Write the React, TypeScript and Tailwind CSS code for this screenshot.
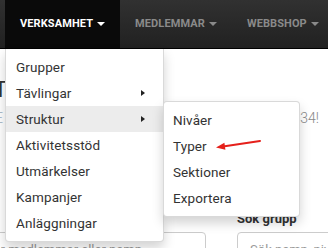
import React from "react";

const menuItems = ["Grupper", "Tävlingar", "Struktur", "Aktivitetsstöd", "Utmärkelser", "Kampanjer", "Anläggningar"];
const hasSub = ["Tävlingar", "Struktur"];
const subItems = ["Nivåer", "Typer", "Sektioner", "Exportera"];

function SubMenu() {
  return (
    <ul className="absolute left-full -top-[5px] z-10 w-[137px] py-[5px] bg-white border border-black/15 rounded-[4px] shadow-[0_6px_12px_rgba(0,0,0,0.175)]">
      {subItems.map((s) => (
        <li key={s} className="flex items-center h-[26px] pl-[9px]">
          {s}
        </li>
      ))}
    </ul>
  );
}

function Dropdown() {
  return (
    <ul className="absolute left-0 top-[49px] z-10 w-[159px] py-[5px] bg-white border border-black/15 border-t-0 rounded-b-[4px] shadow-[0_6px_12px_rgba(0,0,0,0.175)] text-[13.5px] leading-[20px] font-normal text-[#333]">
      {menuItems.map((it) => (
        <li
          key={it}
          className={`relative flex items-center justify-between h-[26px] pl-[10px] pr-[18px] ${it === "Struktur" ? "bg-[#ececec]" : ""}`}
        >
          <span>{it}</span>
          {hasSub.includes(it) && (
            <span className="w-0 h-0 border-y-[3.5px] border-y-transparent border-l-[4px] border-l-[#222]" />
          )}
          {it === "Struktur" && <SubMenu />}
        </li>
      ))}
    </ul>
  );
}

function NavItem({ label, active, children }: { label: string; active?: boolean; children?: React.ReactNode }) {
  return (
    <div
      className={`relative flex items-center gap-[4px] h-[48px] px-[15px] text-[11px] font-bold tracking-[0.1px] ${
        active ? "bg-[#0a0a0a] text-white" : "text-[#8a8a8a]"
      }`}
    >
      <span>{label}</span>
      <span
        className={`w-0 h-0 border-x-4 border-x-transparent border-t-4 ${active ? "border-t-white" : "border-t-[#8a8a8a]"}`}
      />
      {children}
    </div>
  );
}

export default function App() {
  return (
    <div className="relative w-[328px] h-[248px] overflow-hidden bg-white font-['Roboto',sans-serif]">
      <nav className="flex h-[49px] pl-[5px] border-b border-black bg-linear-to-b from-[#313131] to-[#212121]">
        <NavItem label="VERKSAMHET" active>
          <Dropdown />
        </NavItem>
        <NavItem label="MEDLEMMAR" />
        <NavItem label="WEBBSHOP" />
      </nav>

      <main>
        <h1 className="mt-[27px] -ml-[6px] text-[22px] leading-[28px] text-[#333]">Typer</h1>
        <div className="mt-[4px] flex justify-between pr-[9px] text-[14px] leading-[20px] font-light">
          <span className="-ml-[5px] text-[#9eb0c2]">E</span>
          <span className="text-[#888]">Välkommen tillbaka 2834!</span>
        </div>

        <div className="mt-[81px] flex gap-[31px]">
          <div className="shrink-0 w-[266px] -ml-[60px]">
            <label className="block text-[13px] leading-[20px] font-bold text-[#333]">Sök</label>
            <input
              readOnly
              placeholder="Sök efter medlemmar eller namn"
              className="mt-[3px] w-full h-[34px] px-[12px] border border-[#ccc] rounded-[4px] text-[13px] placeholder:text-[#999] outline-none"
            />
          </div>
          <div className="shrink-0 w-[240px]">
            <label className="block text-[13px] leading-[20px] font-bold text-[#333]">Sök grupp</label>
            <input
              readOnly
              placeholder="Sök namn, nivå eller typ"
              className="mt-[3px] w-full h-[34px] px-[12px] border border-[#ccc] rounded-[4px] text-[13px] placeholder:text-[#999] outline-none"
            />
          </div>
        </div>
      </main>

      {/* red annotation arrow */}
      <svg className="absolute left-[210px] top-[135px] z-20" width="56" height="20" viewBox="0 0 56 20">
        <line x1="50" y1="6" x2="13" y2="11.5" stroke="#e5201b" strokeWidth="2" strokeLinecap="round" />
        <polygon points="6,12.5 14.4,7.7 15.4,14.7" fill="#e5201b" />
      </svg>
    </div>
  );
}
